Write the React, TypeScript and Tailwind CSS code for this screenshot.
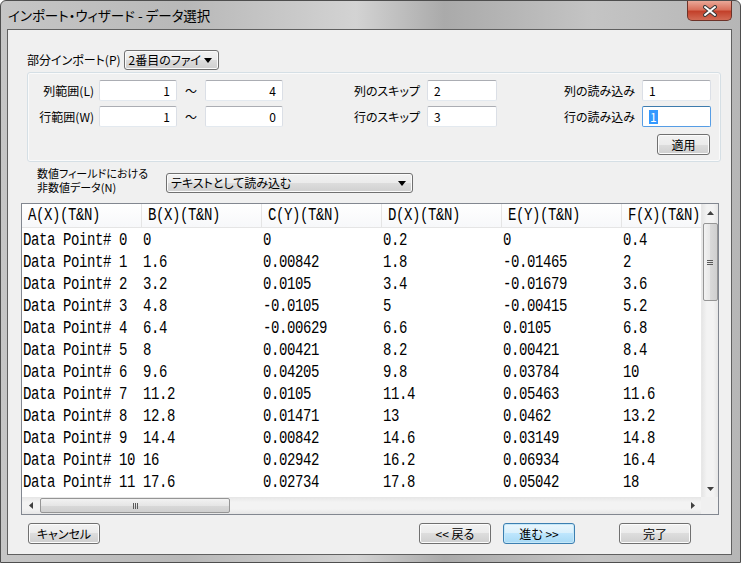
import React from "react";

const headers = ["A(X)(T&N)", "B(X)(T&N)", "C(Y)(T&N)", "D(X)(T&N)", "E(Y)(T&N)", "F(X)(T&N)"];

const rows = [
  ["Data Point# 0", "0", "0", "0.2", "0", "0.4"],
  ["Data Point# 1", "1.6", "0.00842", "1.8", "-0.01465", "2"],
  ["Data Point# 2", "3.2", "0.0105", "3.4", "-0.01679", "3.6"],
  ["Data Point# 3", "4.8", "-0.0105", "5", "-0.00415", "5.2"],
  ["Data Point# 4", "6.4", "-0.00629", "6.6", "0.0105", "6.8"],
  ["Data Point# 5", "8", "0.00421", "8.2", "0.00421", "8.4"],
  ["Data Point# 6", "9.6", "0.04205", "9.8", "0.03784", "10"],
  ["Data Point# 7", "11.2", "0.0105", "11.4", "0.05463", "11.6"],
  ["Data Point# 8", "12.8", "0.01471", "13", "0.0462", "13.2"],
  ["Data Point# 9", "14.4", "0.00842", "14.6", "0.03149", "14.8"],
  ["Data Point# 10", "16", "0.02942", "16.2", "0.06934", "16.4"],
  ["Data Point# 11", "17.6", "0.02734", "17.8", "0.05042", "18"],
];

function TextBox({ value, w, right, focused }: any) {
  return (
    <div
      className={`${w} h-[21px] flex items-center px-[6px] bg-white rounded-[2px] border ${
        focused ? "border-[#569de5] border-t-[#3d7bad]" : "border-[#dbdfe6] border-t-[#abadb3] border-b-[#e3e9ef]"
      } ${right ? "justify-end" : ""}`}
    >
      {focused ? <span className="bg-[#3399ff] text-white leading-[14px] px-[1px]">{value}</span> : value}
    </div>
  );
}

function Arrow({ dir }: any) {
  const d = { down: "M0 0h7L3.5 4z", up: "M0 4h7L3.5 0z", left: "M4 0v7L0 3.5z", right: "M0 0v7L4 3.5z" }[dir as string];
  const vertical = dir === "up" || dir === "down";
  return (
    <svg width={vertical ? 7 : 4} height={vertical ? 4 : 7}>
      <path d={d} fill="#404040" />
    </svg>
  );
}

function Combo({ text, w }: any) {
  return (
    <div className={`${w} h-[20px] flex items-center pl-[4px] pr-[6px] rounded-[3px] border border-[#707070] bg-[linear-gradient(#f2f2f2,#ebebeb_50%,#dddddd_50%,#cfcfcf)] shadow-[inset_0_0_0_1px_#fbfbfb]`}>
      <span className="flex-1 leading-[16px]">{text}</span>
      <svg width="8" height="5">
        <path d="M0 0h8L4 5z" fill="#000" />
      </svg>
    </div>
  );
}

function Btn({ children, w, primary }: any) {
  return (
    <div
      className={`${w} h-[21px] flex items-center justify-center rounded-[3px] border ${
        primary
          ? "border-[#3c7fb1] bg-[linear-gradient(#eaf6fd,#d9f0fc_50%,#bee6fd_50%,#a7d9f5)] shadow-[inset_0_0_0_1px_#c6e8f8]"
          : "border-[#707070] bg-[linear-gradient(#f2f2f2,#ebebeb_50%,#dddddd_50%,#cfcfcf)] shadow-[inset_0_0_0_1px_#fcfcfc]"
      }`}
    >
      {children}
    </div>
  );
}

export default function App() {
  return (
    <div className="w-[741px] h-[563px] flex flex-col rounded-t-[6px] border border-[#4e4e4e] bg-[linear-gradient(90deg,#c6c6c6,#b8b8b8_25%,#d3d3d3_48%,#aaaaaa_60%,#c4c4c4_80%,#b6b6b6)] font-['Noto_Sans_CJK_JP',sans-serif] [font-feature-settings:'palt'] text-[12px] text-black overflow-hidden">
      {/* title bar */}
      <div className="h-[28px] flex items-start">
        <div className="self-center pl-[7px] text-[13.5px] leading-[16px]">インポート・ウィザード - データ選択</div>
        <div className="ml-auto mr-[8px] w-[45px] h-[20px] flex items-center justify-center rounded-b-[5px] border border-t-0 border-[#6d3228] bg-[linear-gradient(#eaa898,#d9715c_45%,#c3412b_55%,#d26b55)]">
          <svg width="14" height="12">
            <path d="M2 2l10 8M12 2L2 10" stroke="#3a3a3a" strokeWidth="4" strokeLinecap="round" />
            <path d="M2 2l10 8M12 2L2 10" stroke="#fff" strokeWidth="2" strokeLinecap="round" />
          </svg>
        </div>
      </div>

      {/* client area */}
      <div className="ml-[6px] mr-[8px] h-[526px] border border-[#606060] bg-[#f0f0f0] flex flex-col">
        <div className="mt-[20px] ml-[19px] h-[20px] flex items-center">
          <span className="leading-[16px]">部分インポート(P)</span>
          <div className="ml-[3px]">
            <Combo text="2番目のファイ" w="w-[95px]" />
          </div>
        </div>

        {/* group */}
        <div className="mt-[2px] ml-[19px] w-[694px] h-[90px] rounded-[3px] border border-[#d5dfe5] shadow-[inset_0_0_0_1px_#fafafa] pt-[7px] flex flex-col">
          <div className="flex h-[21px] items-center">
            <span className="w-[66px] text-right">列範囲(L)</span>
            <div className="ml-[5px]"><TextBox value="1" w="w-[78px]" right /></div>
            <span className="w-[28px] text-center">～</span>
            <TextBox value="4" w="w-[78px]" right />
            <span className="w-[137px] text-right">列のスキップ</span>
            <div className="ml-[7px]"><TextBox value="2" w="w-[70px]" /></div>
            <span className="w-[138px] text-right">列の読み込み</span>
            <div className="ml-[7px]"><TextBox value="1" w="w-[69px]" /></div>
          </div>
          <div className="flex h-[21px] items-center mt-[5px]">
            <span className="w-[66px] text-right">行範囲(W)</span>
            <div className="ml-[5px]"><TextBox value="1" w="w-[78px]" right /></div>
            <span className="w-[28px] text-center">～</span>
            <TextBox value="0" w="w-[78px]" right />
            <span className="w-[137px] text-right">行のスキップ</span>
            <div className="ml-[7px]"><TextBox value="3" w="w-[70px]" /></div>
            <span className="w-[138px] text-right">行の読み込み</span>
            <div className="ml-[7px]"><TextBox value="1" w="w-[69px]" focused /></div>
          </div>
          <div className="mt-[7px] ml-auto mr-[10px]">
            <Btn w="w-[53px]">適用</Btn>
          </div>
        </div>

        {/* non numeric */}
        <div className="mt-[4px] ml-[29px] h-[28px] flex items-end">
          <div className="w-[129px] text-[11px] leading-[14px]">
            <div>数値フィールドにおける</div>
            <div>非数値データ(N)</div>
          </div>
          <div className="mb-[1px]">
            <Combo text="テキストとして読み込む" w="w-[247px]" />
          </div>
        </div>

        {/* table */}
        <div className="mt-[9px] ml-[13px] w-[698px] h-[312px] border border-[#828790] bg-white flex flex-col font-['Liberation_Mono',monospace] text-[14px] tracking-[-0.4px]">
          <div className="flex h-[293px]">
            <div className="w-[679px] overflow-hidden">
              <div className="flex h-[24px] border-b border-[#e5e5e5] bg-[linear-gradient(#ffffff,#f7f8fa)]">
                {headers.map((h) => (
                  <div key={h} className="w-[120px] shrink-0 flex items-center pl-[6px] border-r border-[#e5e5e5]">
                    <span className="scale-y-125">{h}</span>
                  </div>
                ))}
              </div>
              {rows.map((r, i) => (
                <div key={i} className="flex h-[22px] items-center pt-[2px] scale-y-125">
                  {r.map((c, j) => (
                    <div key={j} className="w-[120px] shrink-0 pl-[1px] whitespace-pre">
                      {c}
                    </div>
                  ))}
                </div>
              ))}
            </div>
            {/* vertical scrollbar */}
            <div className="w-[17px] flex flex-col items-center bg-[linear-gradient(90deg,#e6e6e6,#f3f3f3_30%,#f3f3f3_70%,#e6e6e6)] border-l border-[#e8e8e8]">
              <div className="h-[17px] flex items-center justify-center"><Arrow dir="up" /></div>
              <div className="mt-[2px] w-[15px] h-[78px] rounded-[2px] border border-[#959595] bg-[linear-gradient(90deg,#f2f2f2,#e6e6e6_50%,#d9d9d9_50%,#cfcfcf)] flex flex-col items-center justify-center gap-[1px]">
                <div className="w-[6px] h-[1px] bg-[#5a5a5a]" />
                <div className="w-[6px] h-[1px] bg-[#5a5a5a]" />
                <div className="w-[6px] h-[1px] bg-[#5a5a5a]" />
              </div>
              <div className="mt-auto h-[17px] flex items-center justify-center"><Arrow dir="down" /></div>
            </div>
          </div>
          {/* horizontal scrollbar */}
          <div className="flex h-[17px]">
            <div className="w-[679px] flex items-center bg-[linear-gradient(#e6e6e6,#f3f3f3_30%,#f3f3f3_70%,#e6e6e6)]">
              <div className="w-[17px] flex justify-center"><Arrow dir="left" /></div>
              <div className="ml-[1px] w-[190px] h-[15px] rounded-[2px] border border-[#959595] bg-[linear-gradient(#f2f2f2,#e6e6e6_50%,#d9d9d9_50%,#cfcfcf)] flex items-center justify-center gap-[1px]">
                <div className="w-[1px] h-[6px] bg-[#5a5a5a]" />
                <div className="w-[1px] h-[6px] bg-[#5a5a5a]" />
                <div className="w-[1px] h-[6px] bg-[#5a5a5a]" />
              </div>
              <div className="ml-auto w-[17px] flex justify-center"><Arrow dir="right" /></div>
            </div>
            <div className="w-[17px] bg-[#f0f0f0]" />
          </div>
        </div>

        {/* buttons */}
        <div className="mt-[8px] flex pl-[20px] pr-[40px]">
          <Btn w="w-[72px]">キャンセル</Btn>
          <div className="ml-auto"><Btn w="w-[72px]">&lt;&lt; 戻る</Btn></div>
          <div className="ml-[12px]"><Btn w="w-[72px]" primary>進む &gt;&gt;</Btn></div>
          <div className="ml-[44px]"><Btn w="w-[72px]">完了</Btn></div>
        </div>
      </div>
    </div>
  );
}
